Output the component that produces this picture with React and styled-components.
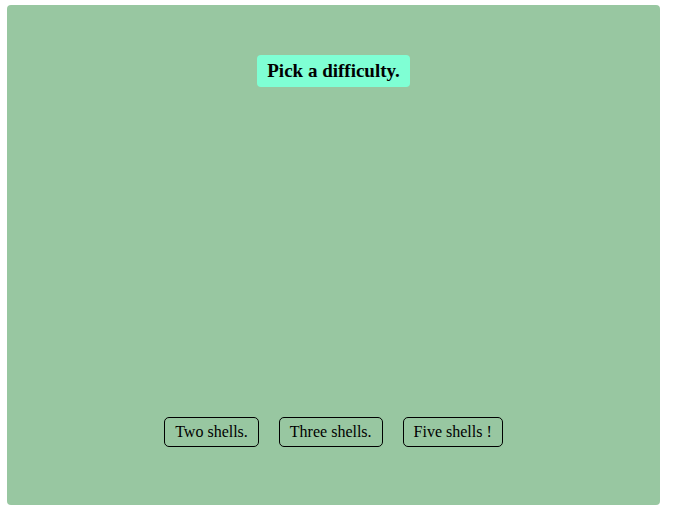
import React from "react";
import styled, { createGlobalStyle } from "styled-components";

const Global = createGlobalStyle`
  html, body { margin: 0; padding: 0; background: #ffffff; }
  body { font-family: "Liberation Serif", "Times New Roman", serif; }
`;

const Page = styled.div`
  padding: 5px 7px;
`;

const Panel = styled.main`
  width: 653px;
  height: 500px;
  box-sizing: border-box;
  background: #98c7a1;
  border-radius: 4px;
  display: flex;
  flex-direction: column;
  align-items: center;
  padding-top: 50px;
`;

const Title = styled.h1`
  margin: 0;
  height: 32px;
  padding: 0 10px;
  display: flex;
  align-items: center;
  background: #7fffd4;
  border-radius: 4px;
  font-size: 19px;
  font-weight: bold;
  color: #000;
`;

const Choices = styled.div`
  margin-top: auto;
  margin-bottom: 58px;
  display: flex;
  gap: 20px;
`;

const Choice = styled.button`
  height: 30px;
  padding: 0 10px;
  background: transparent;
  border: 1px solid #000;
  border-radius: 5px;
  font-family: "Liberation Serif", "Times New Roman", serif;
  font-size: 16px;
  color: #000;
  cursor: pointer;
`;

export default function App() {
  return (
    <Page>
      <Global />
      <Panel>
        <Title>Pick a difficulty.</Title>
        <Choices>
          <Choice>Two shells.</Choice>
          <Choice>Three shells.</Choice>
          <Choice>Five shells !</Choice>
        </Choices>
      </Panel>
    </Page>
  );
}
